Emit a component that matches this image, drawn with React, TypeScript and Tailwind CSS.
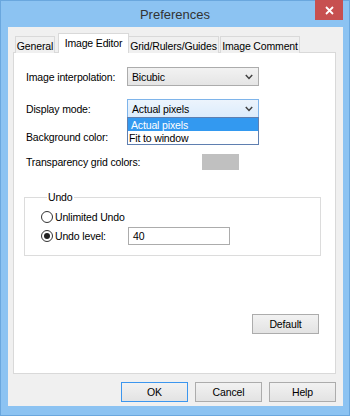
import React from "react";

const Chevron = () => (
  <svg width="8" height="6" viewBox="0 0 8 6" className="shrink-0">
    <path d="M0.8 1 L4 4.4 L7.2 1" fill="none" stroke="#404040" strokeWidth="1.5" />
  </svg>
);

const Radio = ({ checked }: { checked?: boolean }) => (
  <span className="w-[12px] h-[12px] rounded-full border border-[#333] bg-white flex items-center justify-center shrink-0">
    {checked && <span className="w-[6px] h-[6px] rounded-full bg-[#222]" />}
  </span>
);

const Btn = ({ label, primary }: { label: string; primary?: boolean }) => (
  <div
    className={
      "w-[67px] h-[20px] flex items-center justify-center bg-gradient-to-b from-[#f2f2f2] to-[#e3e3e3] border " +
      (primary ? "border-[#3c96ee]" : "border-[#acacac]")
    }
  >
    {label}
  </div>
);

export default function App() {
  return (
    <div className="w-[350px] h-[416px] bg-[#8cc3f2] border border-[#6aa7de] flex flex-col font-['Liberation_Sans',Arial,sans-serif] text-[10.5px] leading-[12px] tracking-[-0.15px] text-black">
      {/* Title bar */}
      <div className="relative h-[26px] shrink-0 flex items-center justify-center">
        <span className="text-[13px] leading-[15px] tracking-normal text-[#333]">Preferences</span>
        <div className="absolute right-[6px] -top-px w-[28px] h-[20px] bg-[#c75050] flex items-center justify-center">
          <svg width="9" height="9" viewBox="0 0 9 9">
            <path d="M1 1 L8 8 M8 1 L1 8" stroke="white" strokeWidth="1.8" />
          </svg>
        </div>
      </div>

      {/* Client area */}
      <div className="ml-[7px] mr-[6px] h-[379px] bg-[#f0f0f0] flex flex-col pl-[5px] pr-[7px] pt-[7px]">
        {/* Tabs */}
        <div className="flex items-end h-[19px] relative z-10 -mb-px">
          <div className="ml-[2px] w-[40px] h-[17px] border border-b-0 border-[#d9d9d9] bg-[#f0f0f0] flex items-center justify-center pt-[1px]">
            General
          </div>
          <div className="ml-[3px] w-[71px] h-[20px] border border-b-0 border-[#d9d9d9] bg-white flex items-start justify-center pt-[3px]">
            Image Editor
          </div>
          <div className="w-[90px] h-[17px] border border-l-0 border-b-0 border-[#d9d9d9] bg-[#f0f0f0] flex items-center justify-center pt-[1px]">
            Grid/Rulers/Guides
          </div>
          <div className="ml-px w-[80px] h-[17px] border border-b-0 border-[#d9d9d9] bg-[#f0f0f0] flex items-center justify-center pt-[1px]">
            Image Comment
          </div>
        </div>

        {/* Panel */}
        <div className="h-[322px] border border-[#d9d9d9] bg-white flex flex-col pl-[12px] pt-[14px]">
          <div className="flex items-center h-[19px]">
            <span className="w-[101px]">Image interpolation:</span>
            <div className="w-[132px] h-[19px] border border-[#acacac] bg-gradient-to-b from-[#f2f2f2] to-[#e5e5e5] flex items-center justify-between pl-[4px] pr-[5px]">
              <span>Bicubic</span>
              <Chevron />
            </div>
          </div>

          <div className="flex items-center h-[19px] mt-[13px]">
            <span className="w-[101px]">Display mode:</span>
            <div className="relative w-[132px] h-[19px] border border-[#7eb4ea] bg-gradient-to-b from-[#ecf4fc] to-[#dcecfc] flex items-center justify-between pl-[4px] pr-[5px]">
              <span>Actual pixels</span>
              <Chevron />
              <div className="absolute left-[-1px] top-[17px] w-[132px] h-[28px] border border-[#5f7fb0] bg-white flex flex-col z-20">
                <div className="h-[13px] bg-[#3399f0] text-white pl-[3px] flex items-center">Actual pixels</div>
                <div className="h-[13px] pl-[1px] flex items-center">Fit to window</div>
              </div>
            </div>
          </div>

          <div className="flex items-center h-[20px] mt-[9px]">
            <span>Background color:</span>
          </div>

          <div className="flex items-center h-[17px] mt-[6px]">
            <span className="w-[176px]">Transparency grid colors:</span>
            <div className="w-[37px] h-[16px] bg-[#c0c0c0]" />
          </div>

          {/* Undo group */}
          <fieldset className="ml-[-2px] mt-[21px] w-[297px] h-[65px] border border-[#dcdcdc] pl-[16px] flex flex-col">
            <legend className="ml-[6px] px-[1px]">Undo</legend>
            <div className="flex items-center h-[14px] mt-[7px]">
              <Radio />
              <span className="ml-[2px]">Unlimited Undo</span>
            </div>
            <div className="flex items-center h-[18px] mt-[3px]">
              <Radio checked />
              <span className="ml-[2px] w-[73px]">Undo level:</span>
              <div className="w-[102px] h-[18px] border border-[#acacac] bg-white flex items-center pl-[4px]">40</div>
            </div>
          </fieldset>

          <div className="flex-1" />
          <div className="flex justify-end pr-[16px] pb-[39px]">
            <Btn label="Default" />
          </div>
        </div>

        {/* Bottom buttons */}
        <div className="flex justify-end gap-[7px] mt-[8px]">
          <Btn label="OK" primary />
          <Btn label="Cancel" />
          <Btn label="Help" />
        </div>
      </div>
    </div>
  );
}
